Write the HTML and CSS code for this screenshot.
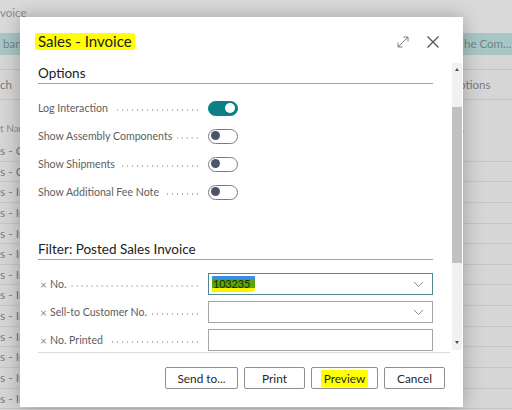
FILE: index.html
```html
<!DOCTYPE html>
<html>
<head>
<meta charset="utf-8">
<link rel="stylesheet" href="styles.css">
</head>
<body>
<div class="page">
  <div class="bg-title"><span>voice</span></div>
  <div class="bg-action"><span class="l">ban</span><span class="r">he Com...</span></div>
  <div class="bg-gap"></div>
  <div class="bg-tabs"><span class="l">ch</span><span class="r">Options</span></div>
  <div class="bg-head"><span class="l">t Nar</span><span class="r">.</span></div>
  <div class="bg-row"><span class="l">s - Q</span></div>
  <div class="bg-row"><span class="l">s - Co</span></div>
  <div class="bg-row"><span class="l">s - In</span></div>
  <div class="bg-row"><span class="l">s - In</span></div>
  <div class="bg-row"><span class="l">s - In</span></div>
  <div class="bg-row"><span class="l">s - In</span></div>
  <div class="bg-row"><span class="l">s - In</span></div>
  <div class="bg-row"><span class="l">s - In</span></div>
  <div class="bg-row"><span class="l">s - In</span></div>
  <div class="bg-row"><span class="l">s - In</span></div>
  <div class="bg-row"><span class="l">s - In</span></div>
  <div class="bg-row"><span class="l">s - In</span></div>
  <div class="bg-row"><span class="l">s - In</span></div>
</div>

<div class="dialog">
  <div class="dlg-head">
    <span class="title">Sales - Invoice</span>
    <div class="head-icons">
      <svg class="ico" width="14" height="14" viewBox="0 0 14 14"><path d="M2 12 L12 2 M7.5 2 H12 V6.5 M2 7.5 V12 H6.5" fill="none" stroke="#7a7a7a" stroke-width="1"/></svg>
      <svg class="ico" width="14" height="14" viewBox="0 0 14 14"><path d="M1.5 1.5 L12.5 12.5 M12.5 1.5 L1.5 12.5" fill="none" stroke="#555" stroke-width="1.3"/></svg>
    </div>
  </div>
  <div class="dlg-body">
    <div class="content">
      <div class="section-title">Options</div>
      <div class="opt-list">
        <div class="row"><div class="label"><span>Log Interaction</span><span class="leader"></span></div><span class="toggle on"></span></div>
        <div class="row"><div class="label"><span>Show Assembly Components</span><span class="leader"></span></div><span class="toggle"></span></div>
        <div class="row"><div class="label"><span>Show Shipments</span><span class="leader"></span></div><span class="toggle"></span></div>
        <div class="row"><div class="label"><span>Show Additional Fee Note</span><span class="leader"></span></div><span class="toggle"></span></div>
      </div>
      <div class="section-title filter">Filter: Posted Sales Invoice</div>
      <div class="opt-list">
        <div class="row"><div class="label"><span class="x">×</span><span>No.</span><span class="leader"></span></div>
          <div class="field focus"><span class="sel">103235</span><svg class="chev" width="11" height="7" viewBox="0 0 11 7"><path d="M1 1 L5.5 5.5 L10 1" fill="none" stroke="#8a8a8a" stroke-width="1"/></svg></div></div>
        <div class="row"><div class="label"><span class="x">×</span><span>Sell-to Customer No.</span><span class="leader"></span></div>
          <div class="field"><span></span><svg class="chev" width="11" height="7" viewBox="0 0 11 7"><path d="M1 1 L5.5 5.5 L10 1" fill="none" stroke="#8a8a8a" stroke-width="1"/></svg></div></div>
        <div class="row"><div class="label"><span class="x">×</span><span>No. Printed</span><span class="leader"></span></div>
          <div class="field"></div></div>
      </div>
    </div>
    <div class="scrollbar">
      <div class="arrow up"></div>
      <div class="track"><div class="thumb"></div></div>
      <div class="arrow down"></div>
    </div>
  </div>
  <div class="footer">
    <button class="btn w-send">Send to...</button>
    <button class="btn w-print">Print</button>
    <button class="btn w-preview"><span class="mark">Preview</span></button>
    <button class="btn w-cancel">Cancel</button>
  </div>
</div>
</body>
</html>
```
FILE: styles.css
```css
* { box-sizing: border-box; }
html, body { margin: 0; padding: 0; }
body {
  width: 512px; height: 410px; overflow: hidden;
  background: #d6d6d6;
  font-family: "Lato", "Open Sans", sans-serif;
  position: relative;
}
.page { width: 512px; color: #7a7a7a; font-size: 11.5px; }
.page .l, .page .r { white-space: nowrap; overflow: hidden; }
.bg-title { height: 33px; line-height: 26px; color: #8a8a8a; background: #dadada; }
.bg-action, .bg-tabs, .bg-head, .bg-row {
  display: grid; grid-template-columns: 458px 1fr;
}
.bg-action { height: 22px; line-height: 22px; background: #a9c6c7; color: #6e8485; }
.bg-action .l { padding-left: 3px; }
.bg-action .r { padding-left: 6px; }
.bg-gap { height: 15px; border-bottom: 1px solid #c3c3c3; }
.bg-tabs { height: 30px; line-height: 30px; border-bottom: 1px solid #c3c3c3; }
.bg-tabs .r { text-indent: -8px; overflow: visible; }
.bg-head { height: 41px; padding-top: 21px; font-size: 10px; line-height: 14px; color: #8e8e8e; }
.bg-head .r { padding-left: 4px; }
.bg-row { height: 20.65px; line-height: 20px; border-bottom: 1px solid #c6c6c6; font-size: 12px; }

.dialog {
  position: absolute; left: 20px; top: 17px; width: 443px; height: 390px;
  background: #fff;
  box-shadow: 0 0 18px rgba(0,0,0,0.28);
  display: flex; flex-direction: column;
  color: #212121;
}
.dlg-head {
  height: 46px; padding: 3px 23px 0 18px;
  display: flex; align-items: center; justify-content: space-between;
}
.title {
  font-size: 15px; background: #ffff00; padding: 0 3px; margin-left: -3px;
  line-height: 17px; border-radius: 2px;
}
.head-icons { display: flex; gap: 16px; align-items: center; }
.ico { display: block; }

.dlg-body { height: 289px; display: flex; }
.content { width: 413px; padding-left: 18px; overflow: hidden; }
.section-title {
  font-size: 13.5px; line-height: 20px; height: 21px;
  border-bottom: 1px solid #a3a3a3; color: #212121;
}
.section-title.filter { margin-top: 33px; }
.opt-list { margin-top: 10px; }
.row { height: 28px; display: flex; align-items: center; }
.label {
  width: 170px; display: flex; align-items: center; padding-right: 8px;
  font-size: 10.6px; color: #5e5e5e; white-space: nowrap;
}
.leader {
  flex: 1; height: 6px; margin-left: 5px; margin-top: 3px;
  background-image: radial-gradient(circle, #b4b4b4 0.7px, transparent 1px);
  background-size: 5px 6px; background-repeat: repeat-x; background-position: right center;
}
.x { color: #8d8d8d; font-size: 12px; margin-left: 2px; margin-right: 3px; }
.toggle {
  width: 30px; height: 15px; border-radius: 8px;
  border: 1.5px solid #7c7c7c; background: #fff; position: relative;
}
.toggle::after {
  content: ""; position: absolute; left: 2px; top: 1.5px;
  width: 9px; height: 9px; border-radius: 50%; background: #4b5567;
}
.toggle.on { background: #0c7f87; border-color: #0c7f87; }
.toggle.on::after { left: auto; right: 2px; top: 1px; width: 10px; height: 10px; background: #fff; }
.field {
  width: 225px; height: 22px; border: 1px solid #a5a5a5;
  display: flex; align-items: center; justify-content: space-between;
  padding: 0 8px 0 3px;
}
.field.focus { border-color: #4e8a8c; }
.sel {
  font-size: 11px; line-height: 16px; padding: 0 5px 0 1px; color: #1d2a00;
  letter-spacing: -0.2px;
  background: linear-gradient(to bottom, #3b8fe6 0 3px, #5ba40f 3px 12px, #f5f500 12px);
  border-radius: 0 0 4px 0;
}
.chev { display: block; }

.scrollbar {
  width: 10px; margin-left: 19px; height: 287px; background: #f1f1f1;
  display: flex; flex-direction: column;
}
.arrow { height: 14px; position: relative; }
.arrow::after {
  content: ""; position: absolute; left: 2.5px; top: 5px;
  border-left: 2.5px solid transparent; border-right: 2.5px solid transparent;
}
.arrow.up::after { border-bottom: 3px solid #505050; }
.arrow.down::after { border-top: 3px solid #505050; }
.track { flex: 1; padding: 30px 0 0; }
.thumb { height: 156px; background: #c1c1c1; }

.footer {
  margin: 0 13px 0 18px; border-top: 1px solid #dcdcdc;
  display: flex; justify-content: flex-end; gap: 6px;
  padding: 14px 5px 0 0;
}
.btn {
  height: 22px; border: 1px solid #8f8f8f; border-radius: 2px; background: #fff;
  font-family: "Lato", "Open Sans", sans-serif; font-size: 11.8px; color: #262626;
  padding: 0;
}
.w-send { width: 73px; }
.w-print { width: 61px; }
.w-preview { width: 67px; }
.w-cancel { width: 61px; }
.mark { background: #ffff00; padding: 1px 3px; }
```
